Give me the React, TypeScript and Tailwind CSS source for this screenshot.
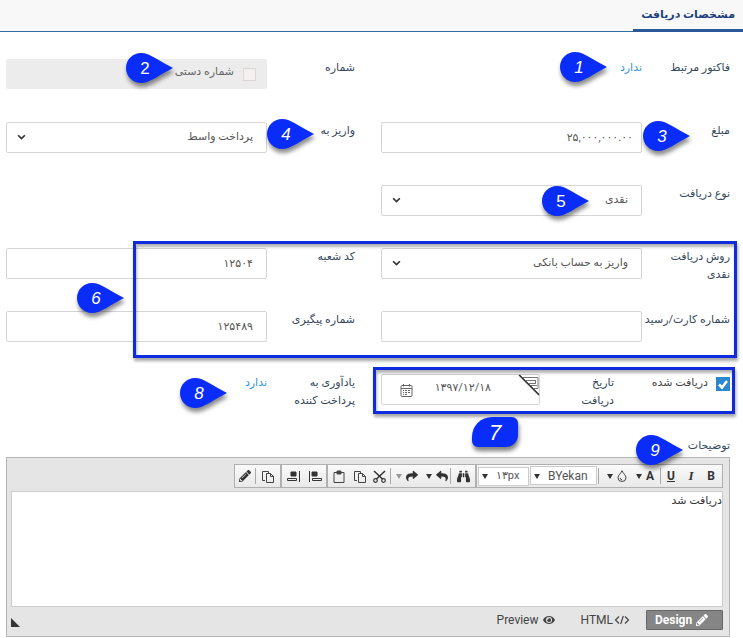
import type { ReactNode } from "react";
import { FaBinoculars, FaEye, FaPencilAlt, FaReply, FaShare } from "react-icons/fa";

const fieldBox =
  "h-[31px] w-full rounded-[2px] border border-[#d5d5d5] bg-white text-[11px] text-[#555] outline-none";

function Pin({ n, place, upright }: { n: number; place: string; upright?: boolean }) {
  return (
    <span className={`pointer-events-none absolute z-20 h-[30px] w-[47px] ${place}`}>
      <svg
        viewBox="0 0 47 30"
        className="absolute inset-0 h-full w-full overflow-visible drop-shadow-[1px_4px_2px_rgba(0,0,0,0.45)]"
      >
        <path d="M15 0C6.700 0 0 6.700 0 15s6.700 15 15 15c9 0 18-8 32-15C33 8 24 0 15 0z" fill="#0a2cf8" />
      </svg>
      <span
        dir="ltr"
        className={`absolute inset-y-0 left-0 flex w-[38px] items-center justify-center font-['Liberation_Sans',sans-serif] text-[17px] leading-none text-white ${upright ? "" : "italic"}`}
      >
        {n}
      </span>
    </span>
  );
}

function Chevron() {
  return (
    <svg viewBox="0 0 8 6" className="pointer-events-none absolute top-3 left-[11px] h-[7px] w-[9px]">
      <path d="M1 1l3 3 3-3" fill="none" stroke="#333" strokeWidth="1.500" />
    </svg>
  );
}

function Row({ id, label, wrap, children }: { id?: string; label: string; wrap?: boolean; children: ReactNode }) {
  return (
    <div className="relative flex items-start">
      <label
        htmlFor={id}
        className={`w-[88px] shrink-0 text-[11px] leading-[18px] text-[#33475b] ${wrap ? "pl-5" : ""}`}
      >
        {label}
      </label>
      <div className="relative min-w-0 flex-1">{children}</div>
    </div>
  );
}

function SelectField({ id, value }: { id: string; value: string }) {
  return (
    <>
      <select id={id} className={`${fieldBox} appearance-none pr-[13px] pl-8`}>
        <option>{value}</option>
      </select>
      <Chevron />
    </>
  );
}

function Tool({ label, w, children }: { label: string; w: string; children: ReactNode }) {
  return (
    <button type="button" aria-label={label} className={`flex h-full items-center justify-center gap-1 ${w}`}>
      {children}
    </button>
  );
}

function Caret({ faded }: { faded?: boolean }) {
  return (
    <svg viewBox="0 0 6 5" className="h-[5px] w-[6px] shrink-0">
      <path d="M0 0h6L3 5z" fill={faded ? "#999" : "#333"} />
    </svg>
  );
}

function Sep() {
  return <span className="h-4 w-px bg-[#aaa]" />;
}

const group =
  "flex h-full items-center border border-[#b0b0b0] bg-gradient-to-b from-[#fafafa] to-[#e9e9e9]";

function PagesIcon() {
  return (
    <svg viewBox="0 0 14 13" className="h-[13px] w-[14px]" fill="none" stroke="#444">
      <path d="M4 10.500H1.500V1.500h6V3M5.500 3.500h4l3 3v6h-7zM9.500 3.500v3h3" />
    </svg>
  );
}

export default function App() {
  return (
    <div dir="rtl" className="min-h-screen bg-white font-[Roboto,'DejaVu_Sans',sans-serif] text-[11px] text-[#444]">
      <header className="flex h-8 border-b border-[#2d6da8] bg-[#f8f8f8]">
        <h1 className="-mb-px border-b-[3px] border-[#2a5898] px-2 text-[11px] leading-[29px] font-bold text-[#1c3f7c]">
          مشخصات دریافت
        </h1>
      </header>

      <form className="pt-[27px] pr-[13px] pl-[6px]">
        <div className="grid auto-rows-[63px] grid-cols-2 gap-x-[26px]">
          <Row label="فاکتور مرتبط">
            <a href="#invoice" className="block leading-[18px] text-[#2b96e8]">ندارد</a>
            <Pin n={1} place="right-[35px] -top-[7px]" />
          </Row>
          <Row label="شماره">
            <div className="flex h-[30px] items-center rounded-[2px] bg-[#ececec] pr-[11px]">
              <input id="manual" type="checkbox" disabled className="h-[13px] w-[13px] appearance-none border border-[#dcd6d6] bg-[#f5f0f0]" />
              <label htmlFor="manual" className="mr-[9px] pb-1 text-[#666]">شماره دستی</label>
            </div>
            <Pin n={2} upright place="right-[94px] -top-[6px]" />
          </Row>

          <Row id="amount" label="مبلغ">
            <input id="amount" dir="ltr" defaultValue="۲۵,۰۰۰,۰۰۰.۰۰" className={`${fieldBox} px-2 text-right`} />
            <Pin n={3} place="-right-[48px] -top-px" />
          </Row>
          <Row id="deposit" label="واریز به">
            <SelectField id="deposit" value="پرداخت واسط" />
            <Pin n={4} place="-right-[47px] -top-[3px]" />
          </Row>

          <Row id="kind" label="نوع دریافت">
            <SelectField id="kind" value="نقدی" />
            <Pin n={5} upright place="right-[53px] top-px" />
          </Row>
        </div>

        <div className="relative grid auto-rows-[63px] grid-cols-2 gap-x-[26px]">
          <Row id="method" wrap label="روش دریافت نقدی">
            <SelectField id="method" value="واریز به حساب بانکی" />
          </Row>
          <Row id="branch" label="کد شعبه">
            <input id="branch" dir="ltr" defaultValue="۱۲۵۰۴" className={`${fieldBox} px-[13px] text-right`} />
            <Pin n={6} place="right-[143px] top-[35px]" />
          </Row>
          <Row id="card" label="شماره کارت/رسید">
            <input id="card" className={`${fieldBox} px-[13px]`} />
          </Row>
          <Row id="track" label="شماره پیگیری">
            <input id="track" dir="ltr" defaultValue="۱۲۵۴۸۹" className={`${fieldBox} px-[13px] text-right`} />
          </Row>
          <div className="pointer-events-none absolute -top-[7px] -right-[7px] bottom-4 left-[127px] z-10 border-[3px] border-[#102bdc] shadow-[1px_3px_3px_rgba(0,0,0,0.35),inset_1px_3px_3px_rgba(0,0,0,0.3)]" />
        </div>

        <div className="grid auto-rows-[63px] grid-cols-2 gap-x-[26px]">
          <div className="relative flex items-start">
            <div className="flex w-[116px] shrink-0 items-start">
              <span className="relative mt-[3px] h-[14px] w-[14px]">
                <input id="received" type="checkbox" defaultChecked className="block h-[14px] w-[14px] appearance-none bg-[#2d87cf]" />
                <svg viewBox="0 0 14 14" className="pointer-events-none absolute inset-0 h-[14px] w-[14px]">
                  <path d="M3 7.500l3 3 5-6.500" fill="none" stroke="#fff" strokeWidth="2.500" />
                </svg>
              </span>
              <label htmlFor="received" className="mr-2 leading-[18px]">دریافت شده</label>
            </div>
            <label htmlFor="date" className="w-[74px] shrink-0 pl-8 leading-[18px] text-[#33475b]">تاریخ دریافت</label>
            <div className="relative min-w-0 flex-1">
              <input id="date" dir="ltr" defaultValue="۱۳۹۷/۱۲/۱۸" className={`${fieldBox} pr-12 pb-1 text-right`} />
              <button type="button" aria-label="تقویم" className="absolute top-[10px] left-[19px]">
                <svg viewBox="0 0 13 13" className="h-[13px] w-[13px]" fill="none" stroke="#666">
                  <rect x="1" y="1.500" width="11" height="11" rx="1" />
                  <path d="M1 4.500h11M3.500 0v2.500M9.500 0v2.500M3 6.500h7M3 8.500h7M3 10.500h5" />
                  <path d="M4.500 5v7M7.500 5v7" stroke="#fff" />
                </svg>
              </button>
              <svg viewBox="0 0 22 22" className="pointer-events-none absolute top-0 right-0 h-[22px] w-[22px]" fill="none" stroke="#777">
                <path d="M5 3.500h15v11h-4M8 6.500h9M17.500 6v3M11 9.500h7M13 11.500h6" />
                <path d="M2 1l19 19" stroke="#777" strokeWidth="1" />
                <path d="M1 1l20 20" stroke="#333" strokeWidth="1.300" />
              </svg>
            </div>
            <div className="pointer-events-none absolute -top-[7px] -right-[5px] -left-2 z-10 h-[47px] border-[3px] border-[#102bdc] shadow-[1px_3px_3px_rgba(0,0,0,0.35),inset_1px_3px_3px_rgba(0,0,0,0.3)]" />
            <span className="absolute top-[43px] left-[91px] z-20 flex h-[30px] w-[46px] items-center justify-center rounded-[6px] rounded-tl-[20px] rounded-br-[12px] bg-[#0a2cf8] font-['Liberation_Sans',sans-serif] text-[22px] text-white italic shadow-[1px_4px_4px_rgba(0,0,0,0.5)]">
              7
            </span>
          </div>
          <Row wrap label="یادآوری به پرداخت کننده">
            <a href="#reminder" className="block leading-[18px] text-[#2b96e8]">ندارد</a>
            <Pin n={8} place="right-[40px] top-1" />
          </Row>
        </div>

        <div className="relative">
          <label htmlFor="notes" className="block h-5 leading-[18px] text-[#33475b]">توضیحات</label>
          <Pin n={9} place="right-[47px] -top-[2px]" />
        </div>

        <section dir="ltr" className="border border-[#b5b5b5] bg-[#e5e5e5] pt-[6px] pr-[6px] pl-1">
          <div className="flex h-6 justify-end text-[#333]">
            <div className={`${group} w-[47px]`}>
              <Tool label="قالب" w="w-5"><FaPencilAlt size={12} /></Tool>
              <Sep />
              <Tool label="صفحه" w="w-6"><PagesIcon /></Tool>
            </div>
            <div className={`${group} w-[46px]`}>
              <Tool label="راست به چپ" w="w-[22px]">
                <svg viewBox="0 0 13 11" className="h-[11px] w-[13px]" stroke="#333" fill="none">
                  <path d="M4 1h5v4H4z" fill="#333" /><path d="M.5 7.500h9v2h-9zM12.500 0v11" />
                </svg>
              </Tool>
              <Tool label="چپ به راست" w="w-[22px]">
                <svg viewBox="0 0 13 11" className="h-[11px] w-[13px]" stroke="#333" fill="none">
                  <path d="M3 1h5v4H3z" fill="#333" /><path d="M3.500 7.500h9v2h-9zM.5 0v11" />
                </svg>
              </Tool>
            </div>
            <div className={`${group} w-[149px]`}>
              <Tool label="چسباندن" w="w-[22px]">
                <svg viewBox="0 0 12 13" className="h-[13px] w-3" fill="none" stroke="#444">
                  <path d="M1 2.500h10v10H1z" /><path d="M4 1h4v3H4z" fill="#444" />
                </svg>
              </Tool>
              <Tool label="کپی" w="w-5"><PagesIcon /></Tool>
              <Tool label="برش" w="w-5">
                <svg viewBox="0 0 13 13" className="h-[13px] w-[13px]" fill="none" stroke="#333" strokeWidth="1.200">
                  <path d="M1 1l8.500 8M12 1L3.500 9" strokeWidth="1.500" /><circle cx="2.500" cy="10.500" r="1.800" /><circle cx="10.500" cy="10.500" r="1.800" />
                </svg>
              </Tool>
              <Sep />
              <Tool label="ازنو" w="w-[30px] pl-1"><Caret faded /><FaShare size={12} /></Tool>
              <Tool label="واگرد" w="w-[30px] pl-1"><Caret /><FaReply size={12} /></Tool>
              <Sep />
              <Tool label="جستجو" w="w-6"><FaBinoculars size={13} /></Tool>
            </div>
            <div className={`${group} w-[247px]`}>
              <span className="relative ml-px">
                <select aria-label="اندازه قلم" className="h-[19px] w-[51px] appearance-none border border-[#ccc] bg-white pl-[17px] text-[11px] text-[#555]">
                  <option>۱۳px</option>
                </select>
                <span className="pointer-events-none absolute inset-y-0 left-1 flex items-center"><Caret /></span>
              </span>
              <span className="relative ml-px">
                <select aria-label="قلم" className="h-[19px] w-[67px] appearance-none border border-[#ccc] bg-white pl-[17px] text-[12px] text-[#555]">
                  <option>BYekan</option>
                </select>
                <span className="pointer-events-none absolute inset-y-0 left-1 flex items-center"><Caret /></span>
              </span>
              <span className="ml-px flex"><Sep /></span>
              <Tool label="رنگ زمینه" w="w-[31px] pl-1">
                <Caret />
                <svg viewBox="0 0 10 12" className="h-3 w-[10px]" fill="none" stroke="#444">
                  <path d="M5 .7C4 3.500 1 5 1 7.800a4 3.700 0 0 0 8 0C9 5 6 3.500 5 .7z" /><path d="M3 8q.3 1.500 2 1.800" />
                </svg>
              </Tool>
              <Tool label="رنگ متن" w="w-[30px]"><Caret /><b className="text-[12px]">A</b></Tool>
              <Sep />
              <Tool label="زیرخط" w="w-5"><b className="text-[12px] underline">U</b></Tool>
              <Tool label="مورب" w="w-5"><i className="font-['Liberation_Serif',serif] text-[13px] font-bold">I</i></Tool>
              <Tool label="ضخیم" w="w-5"><b className="text-[12px]">B</b></Tool>
            </div>
          </div>
          <textarea id="notes" dir="rtl" defaultValue="دریافت شد" className="mt-[3px] block h-[116px] w-full resize-none border border-[#ccc] bg-white pt-px text-[11px] leading-4 text-[#333] outline-none" />
          <div className="flex h-[29px] items-start pt-[3px] text-[12px]">
            <svg viewBox="0 0 9 9" className="mt-2 h-[9px] w-[9px]"><path d="M0 0v9h9z" fill="#333" /></svg>
            <div className="ml-auto flex h-5 items-center">
              <button type="button" className="flex items-center gap-1 pr-[26px]">
                Preview <FaEye size={12} />
              </button>
              <button type="button" className="flex items-center gap-px pr-4">
                HTML
                <svg viewBox="0 0 16 10" className="h-[10px] w-4" fill="none" stroke="#444" strokeWidth="1.200">
                  <path d="M5 1.500L1.500 5 5 8.500M11 1.500L14.500 5 11 8.500M9.300 1L6.700 9" />
                </svg>
              </button>
              <button type="button" className="flex h-5 w-[77px] items-center gap-1 rounded-[1px] border border-[#666] bg-[#858585] pl-2 font-bold text-white">
                Design <FaPencilAlt size={12} />
              </button>
            </div>
          </div>
        </section>
      </form>
    </div>
  );
}
